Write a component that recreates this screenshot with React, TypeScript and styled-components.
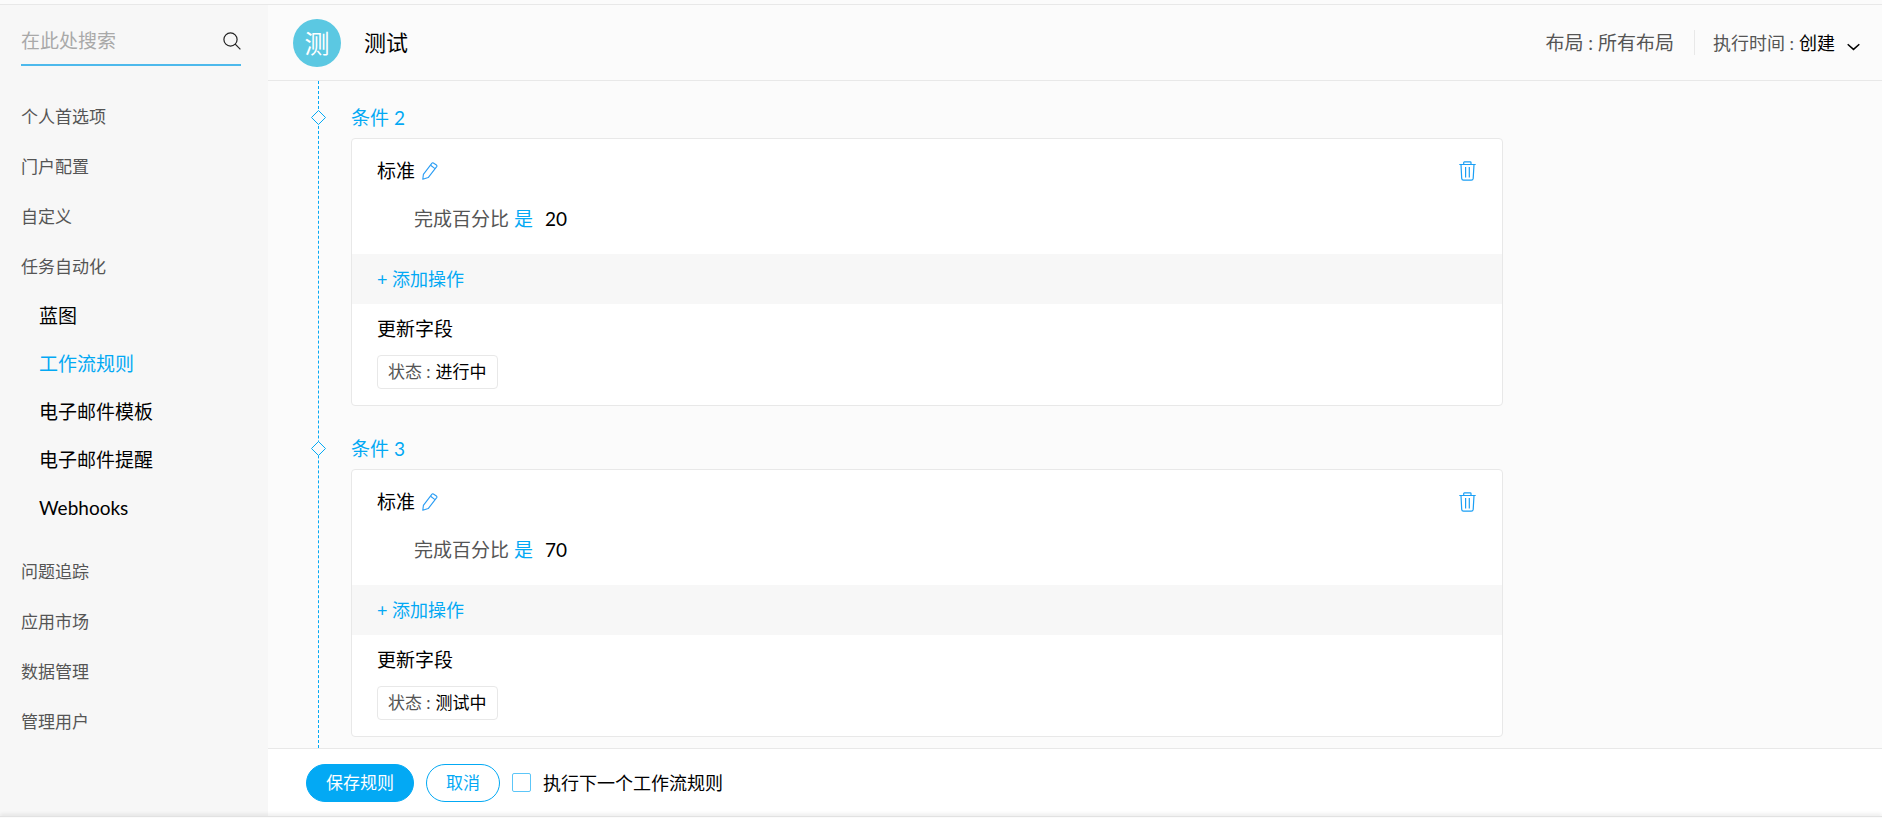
import React from "react";
import styled, { createGlobalStyle } from "styled-components";

const GlobalStyle = createGlobalStyle`
  *, *::before, *::after { box-sizing: border-box; }
  body {
    margin: 0;
    background: #fbfbfb;
    color: #000;
    font-family: Lato, "Noto Sans CJK SC", sans-serif;
    font-size: 19px;
    line-height: 28px;
  }
  button, input, select { font: inherit; color: inherit; }
  h1, h2, h3, p, ul { margin: 0; padding: 0; font-weight: 400; }
  ul { list-style: none; }
  svg { display: block; }
`;

const Page = styled.div`
  display: flex;
  flex-direction: column;
  min-height: 100vh;
`;

const TopEdge = styled.div`
  height: 5px;
  border-bottom: 1px solid #e8e8e8;
`;

const BottomEdge = styled.div`
  height: 2px;
  background: #fbfbfb;
  border-top: 1px solid #e2e2e2;
  box-shadow: 0 -1px 4px rgba(0, 0, 0, 0.16);
`;

const Shell = styled.div`
  display: flex;
  flex: 1;
`;

const Sidebar = styled.aside`
  flex: 0 0 268px;
  min-width: 0;
  background: #f7f7f7;
`;

const SearchBox = styled.form`
  display: flex;
  align-items: center;
  height: 61px;
  margin: 0 27px 26px 21px;
  padding-top: 12px;
  border-bottom: 2px solid #4db9ec;
`;

const SearchInput = styled.input`
  flex: 1;
  width: 100%;
  min-width: 0;
  padding: 0;
  border: 0;
  outline: 0;
  background: transparent;
  &::placeholder { color: #a9a9a9; opacity: 1; }
`;

const IconButton = styled.button`
  padding: 0;
  border: 0;
  background: transparent;
  cursor: pointer;
`;

const NavLink = styled.a`
  display: block;
  padding-left: 21px;
  font-size: 17px;
  line-height: 50px;
  color: #555;
  text-decoration: none;
`;

const SubNav = styled.ul`
  margin-bottom: 15px;
`;

const SubLink = styled.a<{ $active?: boolean }>`
  display: block;
  padding-left: 39px;
  line-height: 48px;
  color: ${(p) => (p.$active ? "#03a9f4" : "#000")};
  text-decoration: none;
`;

const Main = styled.main`
  display: flex;
  flex: 1;
  flex-direction: column;
  min-width: 0;
`;

const Header = styled.header`
  display: flex;
  align-items: center;
  height: 76px;
  padding: 0 22px 0 25px;
  border-bottom: 1px solid #e8e8e8;
`;

const Avatar = styled.span`
  display: grid;
  place-items: center;
  width: 48px;
  height: 48px;
  border-radius: 50%;
  background: #5bc8e2;
  color: #fff;
  font-size: 25px;
`;

const Title = styled.h1`
  margin-left: 23px;
  font-size: 22px;
`;

const LayoutInfo = styled.p`
  margin-left: auto;
  color: #555;
`;

const Divider = styled.span`
  width: 1px;
  height: 25px;
  margin: 0 18px 0 20px;
  background: #e8e8e8;
`;

const TriggerField = styled.label`
  display: flex;
  align-items: center;
  gap: 5px;
  font-size: 18px;
  color: #555;
`;

const TriggerSelect = styled.select`
  width: 61px;
  padding: 0;
  border: 0;
  appearance: none;
  background: transparent;
  color: #000;
`;

const SelectWrap = styled.span`
  display: grid;
  align-items: center;
  & > * { grid-area: 1 / 1; }
  & > svg { justify-self: end; margin-top: 8px; pointer-events: none; }
`;

const Timeline = styled.div`
  flex: 1;
  margin-left: 50px;
  padding: 0 24px 11px 32px;
  border-left: 1px dashed #03a9f4;
`;

const Condition = styled.section`
  padding-top: 23px;
  & + & { margin-top: 6px; }
`;

const ConditionTitle = styled.h2`
  position: relative;
  margin-bottom: 6px;
  font-size: 19px;
  color: #03a9f4;
`;

const Marker = styled.svg`
  position: absolute;
  top: 5px;
  left: -41px;
`;

const Card = styled.div`
  max-width: 1152px;
  border: 1px solid #e8e8e8;
  border-radius: 4px;
  background: #fff;
`;

const Criteria = styled.div`
  padding: 18px 26px 21px 25px;
`;

const CriteriaHead = styled.div`
  display: flex;
  align-items: center;
  gap: 7px;
  margin-bottom: 20px;
`;

const PartTitle = styled.h3`
  font-size: 19px;
`;

const DeleteButton = styled(IconButton)`
  margin-left: auto;
`;

const Rule = styled.p`
  display: flex;
  padding-left: 37px;
  color: #555;
`;

const Operator = styled.span`
  margin: 0 12px 0 5px;
  color: #03a9f4;
`;

const Value = styled.span`
  color: #000;
`;

const AddBar = styled.div`
  display: flex;
  height: 50px;
  padding: 0 25px;
  background: #f7f7f7;
`;

const AddButton = styled(IconButton)`
  font-size: 18px;
  color: #03a9f4;
`;

const Actions = styled.div`
  padding: 11px 25px 16px;
`;

const Tag = styled.p`
  display: flex;
  align-items: center;
  gap: 5px;
  width: max-content;
  height: 34px;
  margin-top: 12px;
  padding: 0 10px;
  border: 1px solid #e8e8e8;
  border-radius: 4px;
  font-size: 17px;
  color: #555;
`;

const Footer = styled.footer`
  display: flex;
  align-items: center;
  gap: 12px;
  height: 68px;
  padding: 0 38px;
  border-top: 1px solid #e8e8e8;
  background: #fff;
`;

const PillButton = styled.button<{ $primary?: boolean }>`
  height: 38px;
  padding: 0 19px;
  border: 1px solid #03a9f4;
  border-radius: 19px;
  background: ${(p) => (p.$primary ? "#03a9f4" : "#fff")};
  color: ${(p) => (p.$primary ? "#fff" : "#03a9f4")};
  font-size: 17px;
  cursor: pointer;
`;

const CheckLabel = styled.label`
  display: flex;
  align-items: center;
  gap: 12px;
  font-size: 18px;
`;

const CheckBox = styled.input`
  width: 19px;
  height: 19px;
  margin: 0;
  border: 1px solid #5cc6f8;
  border-radius: 2px;
  appearance: none;
  background: #fff;
  &:checked { background: #03a9f4; }
`;

const SearchIcon = () => (
  <svg width="18" height="18" viewBox="0 0 18 18" fill="none" stroke="#222" strokeWidth="1.2">
    <circle cx="7.5" cy="7.5" r="6.6" />
    <path d="M12.2 12.2 17.4 17.4" />
  </svg>
);

const PencilIcon = () => (
  <svg width="16" height="18" viewBox="0 0 16 18" fill="none" stroke="#2a9df4" strokeWidth="1.1" strokeLinejoin="round">
    <path d="M.8 17.3 1.4 12.4 9.8 1.3Q10.5.4 11.4 1L14.4 3Q15.3 3.7 14.7 4.6L6.2 15.6Z" />
    <path d="M8.6 3.2 13 6.6" />
  </svg>
);

const TrashIcon = () => (
  <svg width="17" height="20" viewBox="0 0 17 20" fill="none" stroke="#1a9ff5" strokeWidth="1.2">
    <path d="M.3 3.5H16.7M4.7 3.3V1.6Q4.7.9 5.4.9H11.3Q12 .9 12 1.6V3.3" />
    <path d="M2 3.5 2.7 17.4Q2.8 19.2 4.5 19.2H12.3Q14 19.2 14.2 17.4L15 3.5" />
    <path d="M6.6 6V16.5M10.3 6V16.5" />
  </svg>
);

const ChevronIcon = () => (
  <svg width="13" height="8" viewBox="0 0 13 8" fill="none" stroke="#000" strokeWidth="1.5">
    <path d="M.7 1.2 6.5 6.4 12.3 1.2" />
  </svg>
);

const navTop = ["个人首选项", "门户配置", "自定义", "任务自动化"];
const subItems = ["蓝图", "工作流规则", "电子邮件模板", "电子邮件提醒", "Webhooks"];
const navBottom = ["问题追踪", "应用市场", "数据管理", "管理用户"];
const conditions = [
  { index: 2, percent: 20, status: "进行中" },
  { index: 3, percent: 70, status: "测试中" },
];

export default function App() {
  return (
    <Page>
      <GlobalStyle />
      <TopEdge />
      <Shell>
        <Sidebar>
          <SearchBox onSubmit={(e) => e.preventDefault()}>
            <SearchInput type="text" aria-label="搜索" placeholder="在此处搜索" />
            <IconButton aria-label="搜索"><SearchIcon /></IconButton>
          </SearchBox>
          <nav>
            {navTop.map((name) => <NavLink key={name} href="#">{name}</NavLink>)}
            <SubNav>
              {subItems.map((name) => (
                <li key={name}><SubLink href="#" $active={name === "工作流规则"}>{name}</SubLink></li>
              ))}
            </SubNav>
            {navBottom.map((name) => <NavLink key={name} href="#">{name}</NavLink>)}
          </nav>
        </Sidebar>
        <Main>
          <Header>
            <Avatar>测</Avatar>
            <Title>测试</Title>
            <LayoutInfo>布局 : 所有布局</LayoutInfo>
            <Divider />
            <TriggerField>
              执行时间 :
              <SelectWrap>
                <TriggerSelect defaultValue="创建"><option>创建</option></TriggerSelect>
                <ChevronIcon />
              </SelectWrap>
            </TriggerField>
          </Header>
          <Timeline>
            {conditions.map((c) => (
              <Condition key={c.index}>
                <ConditionTitle>
                  <Marker width="17" height="17" viewBox="0 0 17 17" fill="#fbfbfb" stroke="#03a9f4">
                    <path d="M8.5 1.5 15.5 8.5 8.5 15.5 1.5 8.5Z" />
                  </Marker>
                  条件 {c.index}
                </ConditionTitle>
                <Card>
                  <Criteria>
                    <CriteriaHead>
                      <PartTitle>标准</PartTitle>
                      <IconButton type="button" aria-label="编辑"><PencilIcon /></IconButton>
                      <DeleteButton type="button" aria-label="删除"><TrashIcon /></DeleteButton>
                    </CriteriaHead>
                    <Rule>
                      完成百分比<Operator>是</Operator><Value>{c.percent}</Value>
                    </Rule>
                  </Criteria>
                  <AddBar><AddButton type="button">+ 添加操作</AddButton></AddBar>
                  <Actions>
                    <PartTitle>更新字段</PartTitle>
                    <Tag>状态 :<Value>{c.status}</Value></Tag>
                  </Actions>
                </Card>
              </Condition>
            ))}
          </Timeline>
          <Footer>
            <PillButton type="button" $primary>保存规则</PillButton>
            <PillButton type="button">取消</PillButton>
            <CheckLabel><CheckBox type="checkbox" />执行下一个工作流规则</CheckLabel>
          </Footer>
        </Main>
      </Shell>
      <BottomEdge />
    </Page>
  );
}
